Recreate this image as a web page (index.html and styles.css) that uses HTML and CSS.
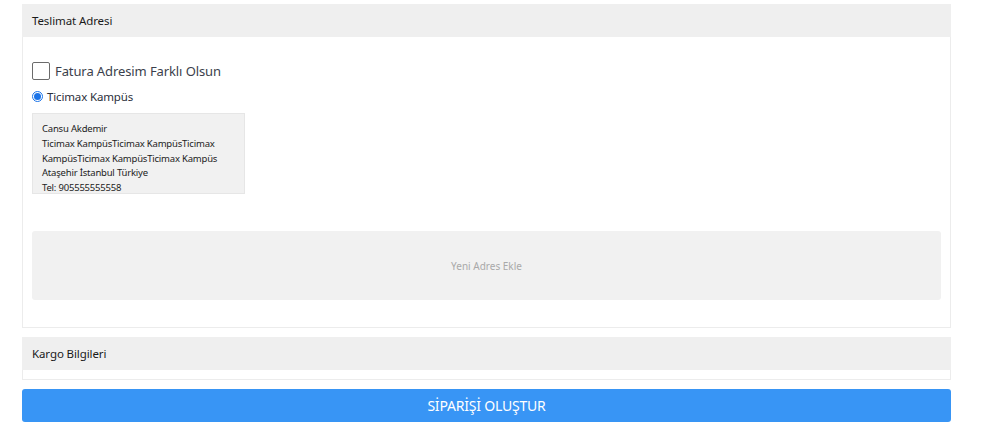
FILE: index.html
```html
<!DOCTYPE html>
<html lang="tr">
<head>
<meta charset="utf-8">
<link rel="stylesheet" href="styles.css">
</head>
<body>
<div class="page">
  <section class="panel panel-address">
    <div class="panel-head">Teslimat Adresi</div>
    <div class="panel-body">
      <label class="check-row">
        <span class="checkbox"></span>
        <span class="check-label">Fatura Adresim Farklı Olsun</span>
      </label>
      <label class="radio-row">
        <span class="radio"><span class="radio-dot"></span></span>
        <span class="radio-label">Ticimax Kampüs</span>
      </label>
      <div class="address-card">
        <div>Cansu Akdemir</div>
        <div>Ticimax KampüsTicimax KampüsTicimax KampüsTicimax KampüsTicimax Kampüs</div>
        <div>Ataşehir İstanbul Türkiye</div>
        <div>Tel: 905555555558</div>
      </div>
      <div class="new-address">Yeni Adres Ekle</div>
    </div>
  </section>
  <section class="panel panel-cargo">
    <div class="panel-head">Kargo Bilgileri</div>
  </section>
  <button class="submit">SİPARİŞİ OLUŞTUR</button>
</div>
</body>
</html>
```
FILE: styles.css
```css
* { box-sizing: border-box; }
html, body { margin: 0; padding: 0; background: #fff; }
body { font-family: "Noto Sans", "Liberation Sans", sans-serif; color: #222; }
.page {
  width: 929px;
  margin-left: 22px;
  padding-top: 4px;
  display: flex;
  flex-direction: column;
}
.panel {
  border: 1px solid #ececec;
  border-top: 0;
  background: #fff;
}
.panel-head {
  height: 33px;
  background: #efefef;
  margin: 0 -1px;
  padding-left: 10px;
  display: flex;
  align-items: center;
  font-size: 11.5px;
  color: #1a1a1a;
  letter-spacing: -0.1px;
}
.panel-body {
  padding: 25px 9px 27px 9px;
  display: flex;
  flex-direction: column;
}
.check-row { display: flex; align-items: center; gap: 5px; height: 18px; }
.checkbox {
  width: 18px; height: 18px;
  border: 1px solid #6b6b6b;
  border-radius: 2px;
  background: #fff;
}
.check-label { font-size: 13px; color: #3b3f4c; letter-spacing: -0.1px; }
.radio-row { display: flex; align-items: center; gap: 4px; margin-top: 10px; height: 12px; }
.radio {
  width: 11px; height: 11px;
  border-radius: 50%;
  border: 1px solid #1a73e8;
  display: flex; align-items: center; justify-content: center;
}
.radio-dot { width: 7px; height: 7px; border-radius: 50%; background: #1a73e8; }
.radio-label { font-size: 11.5px; color: #2b2f3a; letter-spacing: -0.15px; }
.address-card {
  margin-top: 11px;
  width: 213px;
  height: 81px;
  overflow: hidden;
  background: #f1f1f1;
  border: 1px solid #e6e6e6;
  padding: 8px 9px 0 9px;
  font-size: 9.5px;
  line-height: 14.8px;
  color: #222;
  letter-spacing: -0.2px;
}
.new-address {
  margin-top: 37px;
  height: 69px;
  background: #f1f1f1;
  border-radius: 3px;
  display: flex;
  align-items: center;
  justify-content: center;
  font-size: 10px;
  color: #a9a9a9;
}
.panel-cargo { margin-top: 9px; height: 43px; }
.submit {
  margin-top: 9px;
  height: 33px;
  border: 0;
  border-radius: 3px;
  background: #3895f5;
  color: #fff;
  font-family: "Noto Sans", "Liberation Sans", sans-serif;
  font-size: 14px;
  letter-spacing: -0.2px;
  padding: 0;
}
```
